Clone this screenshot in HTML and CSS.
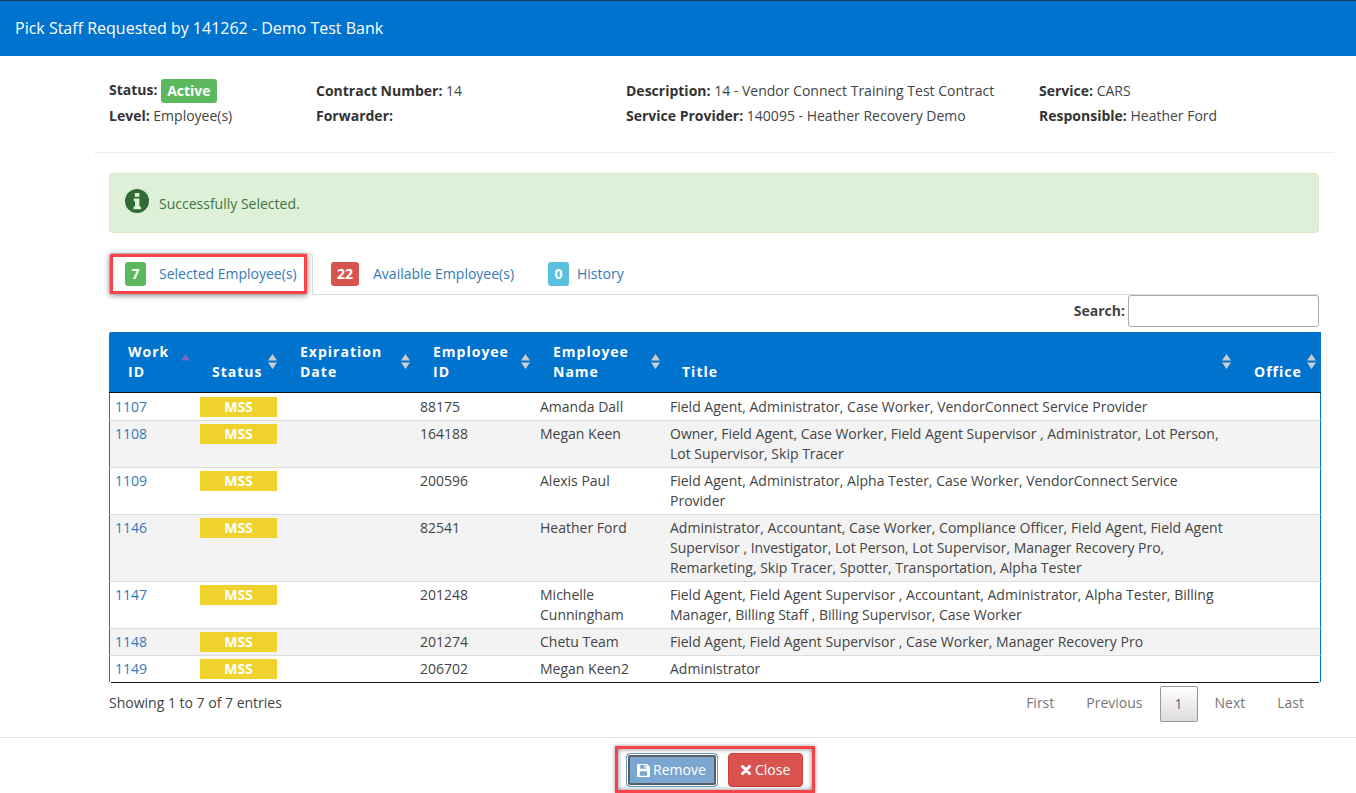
FILE: index.html
```html
<!DOCTYPE html>
<html lang="en">
<head>
<meta charset="utf-8">
<title>Pick Staff</title>
<link rel="stylesheet" href="styles.css">
</head>
<body>
<div class="backdrop"></div>
<div class="modal">
  <header class="modal-head"><h1>Pick Staff Requested by 141262 - Demo Test Bank</h1></header>
  <section class="modal-body">
    <div class="summary">
      <div><b>Status:</b> <span class="label-active">Active</span></div>
      <div><b>Contract Number:</b> 14</div>
      <div><b>Description:</b> 14 - Vendor Connect Training Test Contract</div>
      <div><b>Service:</b> CARS</div>
      <div><b>Level:</b> Employee(s)</div>
      <div><b>Forwarder:</b></div>
      <div><b>Service Provider:</b> 140095 - Heather Recovery Demo</div>
      <div><b>Responsible:</b> Heather Ford</div>
    </div>
    <div class="content">
      <div class="alert">
        <svg class="alert-icon" viewBox="0 0 24 24" aria-hidden="true"><circle cx="12" cy="12" r="12" fill="#2f6b34"/><rect x="9.8" y="4" width="4.6" height="3.8" fill="#dff0d8"/><path d="M8.8 9.6h5.6v8h1.6v2.6H8.400v-2.600h1.600v-5.400H8.800z" fill="#dff0d8"/></svg>
        <span class="alert-text">Successfully Selected.</span>
      </div>
      <nav class="tabs">
        <a class="tab tab-active"><span class="badge badge-green">7</span><span class="tab-text">Selected Employee(s)</span><i class="mark mark-tab"></i></a>
        <a class="tab tab-two"><span class="badge badge-red">22</span><span class="tab-text wide">Available Employee(s)</span></a>
        <a class="tab tab-three"><span class="badge badge-blue">0</span><span class="tab-text tight">History</span></a>
      </nav>
      <div class="search"><label for="q">Search:</label><input id="q" type="text"></div>
    </div>
    <div class="table-wrap">
      <table>
        <colgroup><col class="c1"><col class="c2"><col class="c3"><col class="c4"><col class="c5"><col class="c6"><col class="c7"></colgroup>
        <thead>
          <tr>
            <th class="nudge">Work<br>ID<svg class="sort sort-near" viewBox="0 0 9 15"><path d="M4.500 0 9 6.500H0z" fill="#7b68c8"/></svg></th>
            <th>Status<svg class="sort" viewBox="0 0 9 15"><path d="M4.500 0 9 6.500H0zM4.500 15 0 8.500h9z" fill="#cccccc"/></svg></th>
            <th>Expiration<br>Date<svg class="sort sort-near" viewBox="0 0 9 15"><path d="M4.500 0 9 6.500H0zM4.500 15 0 8.500h9z" fill="#cccccc"/></svg></th>
            <th class="nudge">Employee<br>ID<svg class="sort sort-near" viewBox="0 0 9 15"><path d="M4.500 0 9 6.500H0zM4.500 15 0 8.500h9z" fill="#cccccc"/></svg></th>
            <th class="nudge">Employee<br>Name<svg class="sort sort-near" viewBox="0 0 9 15"><path d="M4.500 0 9 6.500H0zM4.500 15 0 8.500h9z" fill="#cccccc"/></svg></th>
            <th>Title<svg class="sort" viewBox="0 0 9 15"><path d="M4.500 0 9 6.500H0zM4.500 15 0 8.500h9z" fill="#cccccc"/></svg></th>
            <th>Office<svg class="sort" viewBox="0 0 9 15"><path d="M4.500 0 9 6.500H0zM4.500 15 0 8.500h9z" fill="#cccccc"/></svg></th>
          </tr>
        </thead>
        <tbody>
          <tr><td><a>1107</a></td><td><span class="mss">MSS</span></td><td></td><td>88175</td><td>Amanda Dall</td><td>Field Agent, Administrator, Case Worker, VendorConnect Service Provider</td><td></td></tr>
          <tr><td><a>1108</a></td><td><span class="mss">MSS</span></td><td></td><td>164188</td><td>Megan Keen</td><td>Owner, Field Agent, Case Worker, Field Agent Supervisor , Administrator, Lot Person, Lot Supervisor, Skip Tracer</td><td></td></tr>
          <tr><td><a>1109</a></td><td><span class="mss">MSS</span></td><td></td><td>200596</td><td>Alexis Paul</td><td>Field Agent, Administrator, Alpha Tester, Case Worker, VendorConnect Service Provider</td><td></td></tr>
          <tr><td><a>1146</a></td><td><span class="mss">MSS</span></td><td></td><td>82541</td><td>Heather Ford</td><td>Administrator, Accountant, Case Worker, Compliance Officer, Field Agent, Field Agent Supervisor , Investigator, Lot Person, Lot Supervisor, Manager Recovery Pro, Remarketing, Skip Tracer, Spotter, Transportation, Alpha Tester</td><td></td></tr>
          <tr><td><a>1147</a></td><td><span class="mss">MSS</span></td><td></td><td>201248</td><td>Michelle Cunningham</td><td>Field Agent, Field Agent Supervisor , Accountant, Administrator, Alpha Tester, Billing Manager, Billing Staff , Billing Supervisor, Case Worker</td><td></td></tr>
          <tr><td><a>1148</a></td><td><span class="mss">MSS</span></td><td></td><td>201274</td><td>Chetu Team</td><td>Field Agent, Field Agent Supervisor , Case Worker, Manager Recovery Pro</td><td></td></tr>
          <tr><td><a>1149</a></td><td><span class="mss">MSS</span></td><td></td><td>206702</td><td>Megan Keen2</td><td>Administrator</td><td></td></tr>
        </tbody>
      </table>
    </div>
    <div class="table-foot">
      <span class="info">Showing 1 to 7 of 7 entries</span>
      <div class="pager">
        <a class="pg pg-first">First</a><a class="pg pg-prev">Previous</a><a class="pg-current">1</a><a class="pg pg-next">Next</a><a class="pg pg-last">Last</a>
      </div>
    </div>
  </section>
  <footer class="modal-foot">
    <div class="actions">
      <i class="mark mark-actions"></i>
      <button class="btn btn-remove" type="button"><svg class="btn-icon" viewBox="0 0 14 14" aria-hidden="true"><path fill-rule="evenodd" d="M1 0h10l3 3v10a1 1 0 0 1-1 1H1a1 1 0 0 1-1-1V1a1 1 0 0 1 1-1zM3.500 1.200v3.800h6.500V1.200zM3 7.800v4.900h8V7.800zM7.700 1.700h1.500v2.600H7.700z" fill="#fff"/></svg>Remove</button>
      <button class="btn btn-close" type="button"><svg class="close-icon" viewBox="0 0 10 10" aria-hidden="true"><path d="M1.500 1.500l7 7M8.500 1.500l-7 7" stroke="#fff" stroke-width="3" stroke-linecap="round" fill="none"/></svg>Close</button>
    </div>
  </footer>
</div>
</body>
</html>
```
FILE: styles.css
```css
* { box-sizing: border-box; }
html, body { margin: 0; padding: 0; height: 793px; overflow: hidden; background: #fff; }
body { font-family: "Open Sans", "Liberation Sans", sans-serif; font-size: 14px; line-height: 20px; color: #444; }
b { color: #333; }
a { color: #337ab7; text-decoration: none; }

.backdrop { height: 1px; background: #17405f; }
.modal-head { height: 55px; background: #0073cf; padding: 0 15px 2px; display: flex; align-items: center; }
.modal-head h1 { margin: 0; font-size: 16px; font-weight: 400; color: #fff; line-height: 24px; }

.modal-body { padding: 0 22px 0 94px; }
.summary { display: grid; grid-template-columns: 207px 310px 413px 1fr; grid-template-rows: 25px 26px; padding: 22px 15px 0; height: 97px; border-bottom: 1px solid #eee; align-items: center; }
.label-active { display: inline-block; background: #5cb85c; color: #fff; font-weight: 700; height: 24px; line-height: 24px; padding: 0 6px; border-radius: 3px; vertical-align: middle; }

.content { padding: 20px 15px 0; }
.alert { height: 60px; background: #dff0d8; border: 1px solid #d6e9c6; border-radius: 4px; color: #3c763d; padding: 0 15px; display: flex; align-items: center; gap: 10px; }
.alert-icon { width: 24px; height: 24px; margin-top: -4px; }
.alert-text { padding-top: 2px; }

.tabs { display: flex; height: 42px; margin-top: 20px; border-bottom: 1px solid #ddd; }
.tab { position: relative; display: flex; align-items: center; height: 42px; padding: 0 16px; border: 1px solid transparent; white-space: nowrap; }
.tab-active { width: 204px; border-color: #ddd #ddd #fff; border-radius: 4px 4px 0 0; background: #fff; padding-left: 15px; }
.tab-two { padding-left: 17px; }
.tab-text { margin-left: 13px; }
.tab-text.wide { margin-left: 14px; }
.tab-text.tight { margin-left: 8px; }
.badge { display: inline-block; height: 24px; min-width: 21px; padding: 0 6px; line-height: 24px; border-radius: 3px; color: #fff; font-weight: 700; text-align: center; }
.badge-green { background: #5cb85c; }
.badge-red { background: #d9534f; }
.badge-blue { background: #5bc0de; }

.mark { position: absolute; border: 3px solid #f8434b; pointer-events: none; }
.mark-tab { left: 0; top: 0; width: 197px; height: 40px; box-shadow: 0 1px 6px rgba(0, 0, 0, .55); }
.mark-actions { left: 0; top: 0; width: 200px; height: 47px; box-shadow: inset 0 0 5px rgba(0, 0, 0, .5), 0 0 4px rgba(0, 0, 0, .4); }

.search { display: flex; justify-content: flex-end; align-items: center; gap: 3px; height: 32px; font-weight: 700; color: #444; }
.search input { width: 191px; height: 32px; border: 1px solid #aaa; border-radius: 3px; background: #fff; }

.table-wrap { margin: 5px 0 0 15px; width: 1212px; }
.table-wrap::after { content: ""; display: block; height: 1px; margin: 0 2px; background: #111; }
table { border-collapse: separate; border-spacing: 0; table-layout: fixed; width: 1212px; }
.c1 { width: 85px; } .c2 { width: 88px; } .c3 { width: 132px; } .c4 { width: 120px; } .c5 { width: 130px; } .c6 { width: 572px; } .c7 { width: 85px; }
th { position: relative; background: #0073cf; color: #fff; font-weight: 700; letter-spacing: 1px; text-align: left; vertical-align: bottom; padding: 10px 18px; border-bottom: 1px solid #111; line-height: 20px; }
th.nudge { padding-left: 19px; }
th:first-child { border-top-left-radius: 2px; }
.sort { position: absolute; right: 5px; top: 22px; width: 9px; height: 15px; }
.sort-near { right: 4px; }
td { padding: 3px 6px; border-bottom: 1px solid #ddd; vertical-align: top; }
td:first-child { border-left: 1px solid #0073cf; padding-left: 5px; }
td:last-child { border-right: 1px solid #0073cf; }
tbody tr:first-child td { padding-top: 4px; }
tbody tr:nth-child(even) td { background: #f3f3f3; }
tbody tr:last-child td { border-bottom: 0; }
.mss { display: block; width: 77px; height: 20px; background: #f0d22e; color: #fff; font-weight: 700; text-align: center; }

.table-foot { display: flex; justify-content: space-between; align-items: flex-start; padding: 0 0 0 15px; width: 1225px; height: 54px; }
.info { margin-top: 10px; }
.pager { display: flex; align-items: center; height: 36px; margin-top: 3px; color: #777; }
.pg { color: #777; padding: 0 16px 2px; }
.pg-prev { padding-right: 17px; }
.pg-next { padding-left: 17px; }
.pg-last { padding-right: 15px; }
.pg-current { width: 38px; height: 36px; line-height: 34px; text-align: center; color: #666; border: 1px solid #979797; border-radius: 2px; background: linear-gradient(#fff, #dcdcdc); }

.modal-foot { border-top: 1px solid #e5e5e5; height: 56px; display: flex; padding: 8px 0 0 615px; }
.actions { position: relative; display: flex; gap: 10px; width: 200px; height: 47px; padding: 7px 0 0 11px; }
.btn { display: inline-flex; align-items: center; height: 34px; border-radius: 4px; color: #fff; font: 14px/20px "Open Sans", "Liberation Sans", sans-serif; padding: 0 12px; border: 1px solid transparent; }
.btn-icon { width: 13px; height: 13px; margin-right: 3px; flex: none; }
.close-icon { width: 10px; height: 10px; margin-right: 4px; flex: none; }
.btn-remove { width: 92px; background: #7aa6d0; border: 1px solid #6b9ac9; box-shadow: inset 0 0 0 1px #fff, inset 0 0 0 3px #5a5f66; padding: 0 10px; }
.btn-close { width: 75px; background: #d9534f; border-color: #d43f3a; }
```
